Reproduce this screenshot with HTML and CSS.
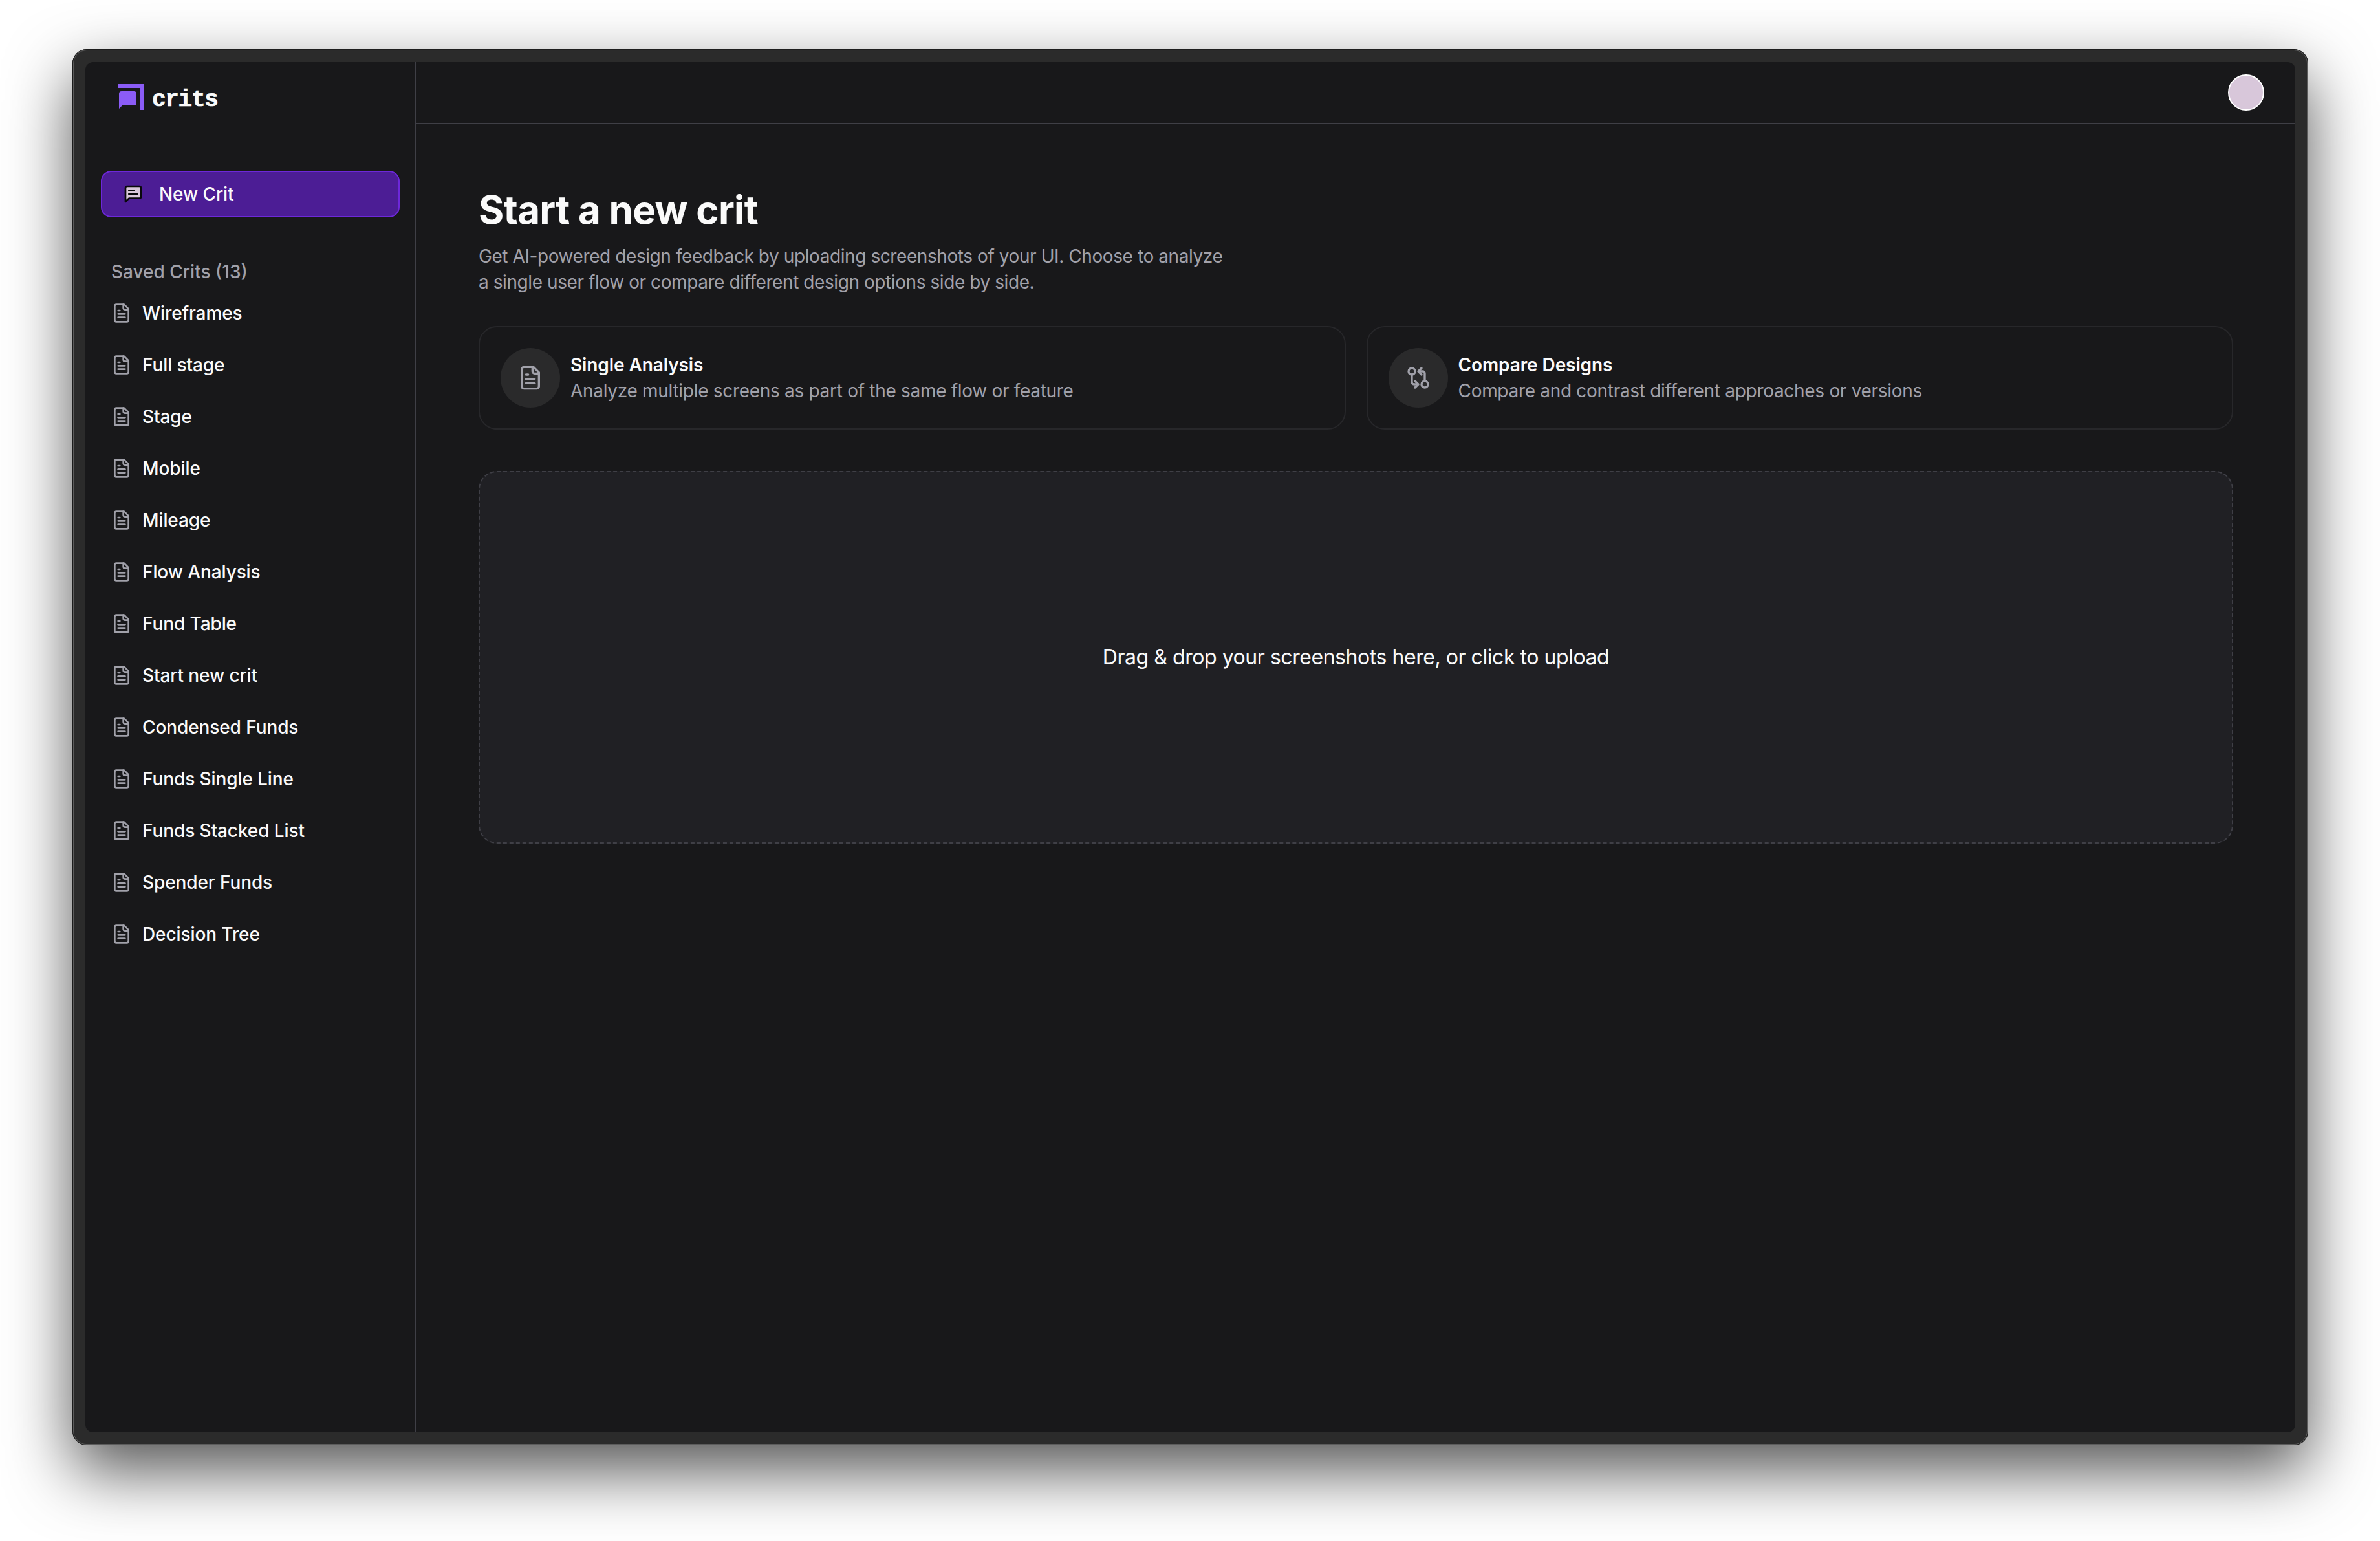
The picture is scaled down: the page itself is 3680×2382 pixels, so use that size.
FILE: index.html
```html
<!DOCTYPE html>
<html lang="en">
<head>
<meta charset="utf-8">
<title>crits</title>
<link rel="stylesheet" href="styles.css">
</head>
<body>
<svg class="sprite" width="0" height="0" aria-hidden="true">
  <symbol id="file" viewBox="0 0 24 24">
    <path d="M15 2H6a2 2 0 0 0-2 2v16a2 2 0 0 0 2 2h12a2 2 0 0 0 2-2V7Z"/>
    <path d="M14 2v4a2 2 0 0 0 2 2h4"/>
    <path d="M10 9H8"/><path d="M16 13H8"/><path d="M16 17H8"/>
  </symbol>
</svg>
<div class="window">
  <div class="screen">
    <aside class="sidebar">
      <div class="brand">
        <svg class="brand-mark" viewBox="0 0 40 40">
          <path class="mark-fill" d="M0 0H40V40H34V6H0Z"/>
          <path class="mark-fill" d="M2 38V15a4 4 0 0 1 4-4H25a4 4 0 0 1 4 4V29a4 4 0 0 1-4 4H7Z"/>
        </svg>
        <span class="brand-name">crits</span>
      </div>
      <button class="new-crit">
        <svg class="new-icon" viewBox="0 0 24 24">
          <path d="M21 15a2 2 0 0 1-2 2H7l-4 4V5a2 2 0 0 1 2-2h14a2 2 0 0 1 2 2z"/>
          <path d="M13 8H7"/><path d="M17 12H7"/>
        </svg>
        <span>New Crit</span>
      </button>
      <div class="saved-label">Saved Crits (13)</div>
      <ul class="crit-list">
        <li class="crit"><svg class="file-icon"><use href="#file"/></svg>Wireframes</li>
        <li class="crit"><svg class="file-icon"><use href="#file"/></svg>Full stage</li>
        <li class="crit"><svg class="file-icon"><use href="#file"/></svg>Stage</li>
        <li class="crit"><svg class="file-icon"><use href="#file"/></svg>Mobile</li>
        <li class="crit"><svg class="file-icon"><use href="#file"/></svg>Mileage</li>
        <li class="crit"><svg class="file-icon"><use href="#file"/></svg>Flow Analysis</li>
        <li class="crit"><svg class="file-icon"><use href="#file"/></svg>Fund Table</li>
        <li class="crit"><svg class="file-icon"><use href="#file"/></svg>Start new crit</li>
        <li class="crit"><svg class="file-icon"><use href="#file"/></svg>Condensed Funds</li>
        <li class="crit"><svg class="file-icon"><use href="#file"/></svg>Funds Single Line</li>
        <li class="crit"><svg class="file-icon"><use href="#file"/></svg>Funds Stacked List</li>
        <li class="crit"><svg class="file-icon"><use href="#file"/></svg>Spender Funds</li>
        <li class="crit"><svg class="file-icon"><use href="#file"/></svg>Decision Tree</li>
      </ul>
    </aside>
    <main class="main">
      <header class="topbar"><div class="avatar"></div></header>
      <section class="content">
        <h1 class="title">Start a new crit</h1>
        <p class="lede">Get AI-powered design feedback by uploading screenshots of your UI. Choose to analyze a single user flow or compare different design options side by side.</p>
        <div class="modes">
          <div class="mode">
            <div class="mode-icon"><svg class="mode-svg"><use href="#file"/></svg></div>
            <div class="mode-text">
              <div class="mode-title">Single Analysis</div>
              <div class="mode-desc">Analyze multiple screens as part of the same flow or feature</div>
            </div>
          </div>
          <div class="mode">
            <div class="mode-icon">
              <svg class="mode-svg" viewBox="0 0 24 24">
                <circle cx="18" cy="18" r="3"/><circle cx="6" cy="6" r="3"/>
                <path d="M13 6h3a2 2 0 0 1 2 2v7"/><path d="M11 18H8a2 2 0 0 1-2-2V9"/>
                <path d="m15 9-3-3 3-3"/><path d="m9 15 3 3-3 3"/>
              </svg>
            </div>
            <div class="mode-text">
              <div class="mode-title">Compare Designs</div>
              <div class="mode-desc">Compare and contrast different approaches or versions</div>
            </div>
          </div>
        </div>
        <div class="dropzone">Drag &amp; drop your screenshots here, or click to upload</div>
      </section>
    </main>
  </div>
</div>
</body>
</html>
```
FILE: styles.css
```css
* { box-sizing: border-box; }
html, body { margin: 0; padding: 0; background: #fff; }
body {
  width: 3680px;
  height: 2382px;
  padding: 76px 111px 0 112px;
  overflow: hidden;
  font-family: Inter, "Liberation Sans", sans-serif;
  font-size: 28px;
  line-height: 40px;
  color: #fafafa;
}
.sprite { position: absolute; }
.window {
  height: 2158px;
  padding: 20px;
  background: #2b2b2b;
  border-radius: 22px;
  box-shadow: 0 0 0 1px #1c1c1c inset, 0 0 0 2px #5c5c5c inset, 0 40px 100px rgba(0,0,0,.67);
}
.screen {
  display: flex;
  height: 100%;
  background: #18181a;
  border-radius: 12px;
  overflow: hidden;
}
.sidebar {
  flex: none;
  width: 512px;
  padding: 0 24px;
  border-right: 2px solid #3f3f46;
}
.brand {
  display: flex;
  align-items: center;
  gap: 13px;
  height: 108px;
  margin-bottom: 60px;
  padding-left: 26px;
}
.brand-mark { width: 40px; height: 40px; flex: none; }
.mark-fill { fill: #8b5cf6; }
.brand-name {
  padding-top: 10px;
  font-family: "Liberation Mono", monospace;
  font-weight: 700;
  font-size: 36px;
  letter-spacing: -1.3px;
  -webkit-text-stroke: 0.7px #fafafa;
  color: #fafafa;
}
.new-crit {
  display: flex;
  align-items: center;
  gap: 24px;
  width: 100%;
  height: 72px;
  padding: 0 32px;
  background: #4c1d95;
  border: 2px solid #6d28d9;
  border-radius: 16px;
  color: #fafafa;
  font: 500 28px/40px Inter, "Liberation Sans", sans-serif;
  letter-spacing: -0.1px;
}
.new-icon {
  width: 32px;
  height: 32px;
  flex: none;
  fill: #d8c7da;
  stroke: #09090b;
  stroke-width: 2;
  stroke-linecap: round;
  stroke-linejoin: round;
}
.saved-label {
  margin: 64px 0 4px;
  padding-left: 16px;
  font-weight: 500;
  color: #a1a1aa;
}
.crit-list { list-style: none; margin: 0; padding: 0; }
.crit {
  display: flex;
  align-items: center;
  gap: 16px;
  height: 80px;
  padding-left: 16px;
  font-weight: 500;
  letter-spacing: -0.1px;
}
.file-icon, .mode-svg {
  flex: none;
  fill: none;
  stroke: #a1a1aa;
  stroke-width: 2;
  stroke-linecap: round;
  stroke-linejoin: round;
}
.file-icon { width: 32px; height: 32px; }
.main { flex: 1; min-width: 0; display: flex; flex-direction: column; }
.topbar {
  flex: none;
  display: flex;
  align-items: center;
  justify-content: flex-end;
  height: 96px;
  padding-right: 48px;
  border-bottom: 2px solid #3f3f46;
}
.avatar {
  width: 56px;
  height: 56px;
  background: #d8c7da;
  border: 2px solid #fff;
  border-radius: 50%;
}
.content { padding: 96px; }
.title {
  margin: 0;
  font-size: 60px;
  line-height: 72px;
  font-weight: 700;
  letter-spacing: -0.7px;
}
.lede {
  max-width: 1152px;
  margin: 16px 0 48px;
  color: #a1a1aa;
  letter-spacing: -0.42px;
}
.modes { display: grid; grid-template-columns: 1fr 1fr; gap: 32px; margin-bottom: 64px; }
.mode {
  display: flex;
  align-items: center;
  gap: 16px;
  height: 160px;
  padding: 0 32px;
  border: 2px solid #27272a;
  border-radius: 28px;
}
.mode-icon {
  flex: none;
  display: flex;
  align-items: center;
  justify-content: center;
  width: 92px;
  height: 92px;
  background: #2a2a2b;
  border-radius: 50%;
}
.mode-svg { width: 40px; height: 40px; }
.mode-title { font-weight: 600; letter-spacing: -0.1px; }
.mode-desc { color: #a1a1aa; letter-spacing: -0.3px; }
.dropzone {
  display: flex;
  align-items: center;
  justify-content: center;
  height: 576px;
  background: #202024;
  border: 2px dashed #3f3f46;
  border-radius: 28px;
  font-size: 32px;
  letter-spacing: -0.45px;
}
```
